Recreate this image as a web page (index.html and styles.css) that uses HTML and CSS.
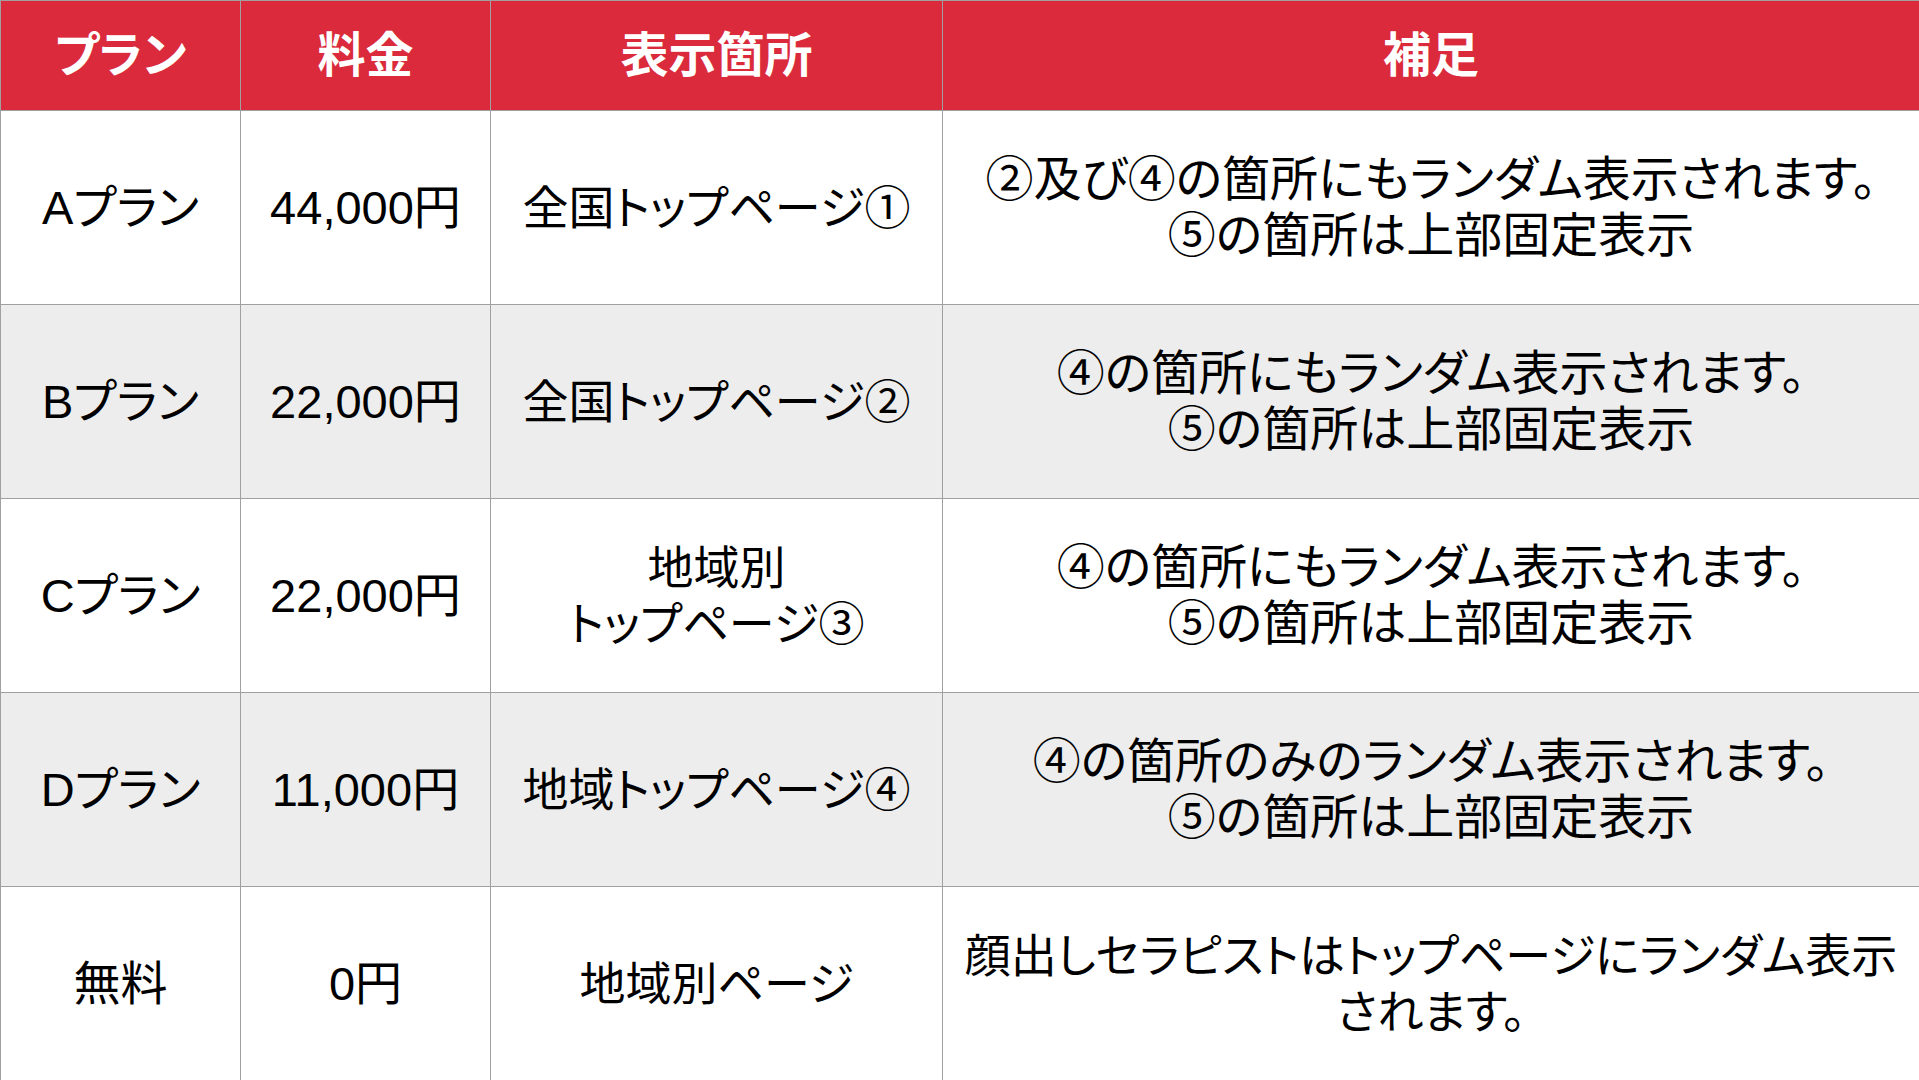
FILE: index.html
```html
<!DOCTYPE html>
<html lang="ja">
<head>
<meta charset="utf-8">
<title>プラン表</title>
<link rel="stylesheet" href="styles.css">
</head>
<body>
<table class="plans">
  <colgroup>
    <col class="c-plan">
    <col class="c-price">
    <col class="c-place">
    <col class="c-note">
  </colgroup>
  <thead>
    <tr class="head">
      <th>プラン</th>
      <th>料金</th>
      <th>表示箇所</th>
      <th>補足</th>
    </tr>
  </thead>
  <tbody>
    <tr class="row">
      <td>Aプラン</td>
      <td>44,000円</td>
      <td class="place">全国トップページ①</td>
      <td class="note">②及び④の箇所にもランダム表示されます。<br>⑤の箇所は上部固定表示</td>
    </tr>
    <tr class="row alt">
      <td>Bプラン</td>
      <td>22,000円</td>
      <td class="place">全国トップページ②</td>
      <td class="note">④の箇所にもランダム表示されます。<br>⑤の箇所は上部固定表示</td>
    </tr>
    <tr class="row">
      <td>Cプラン</td>
      <td>22,000円</td>
      <td class="place">地域別<br>トップページ③</td>
      <td class="note">④の箇所にもランダム表示されます。<br>⑤の箇所は上部固定表示</td>
    </tr>
    <tr class="row alt">
      <td>Dプラン</td>
      <td>11,000円</td>
      <td class="place">地域トップページ④</td>
      <td class="note">④の箇所のみのランダム表示されます。<br>⑤の箇所は上部固定表示</td>
    </tr>
    <tr class="row">
      <td>無料</td>
      <td>0円</td>
      <td class="place">地域別ページ</td>
      <td class="note small">顔出しセラピストはトップページにランダム表示<br>されます。</td>
    </tr>
  </tbody>
</table>
</body>
</html>
```

FILE: styles.css
```css
html, body {
  margin: 0;
  padding: 0;
  background: #ffffff;
}

body {
  font-family: "Liberation Sans", "Noto Sans CJK JP", sans-serif;
  color: #000000;
  font-feature-settings: "palt";
}

.plans {
  width: 1919px;
  table-layout: fixed;
  border-collapse: collapse;
}

.c-plan { width: 240px; }
.c-price { width: 250px; }
.c-place { width: 452px; }
.c-note { width: 977px; }

.plans th,
.plans td {
  border: 1px solid #a0a0a0;
  text-align: center;
  vertical-align: middle;
  padding: 0;
  white-space: nowrap;
}

.head {
  height: 110px;
}

.head th {
  background: #da2a3b;
  color: #ffffff;
  font-weight: 700;
  font-size: 48px;
  line-height: 1;
}

.row {
  height: 194px;
}

.row td {
  font-size: 47px;
  line-height: 56px;
  font-weight: 400;
}

.row.alt td {
  background: #ededed;
}

.row td.place {
  font-size: 46px;
}

.row td.note {
  font-size: 48px;
}

.row td.note.small {
  font-size: 46px;
}
```
